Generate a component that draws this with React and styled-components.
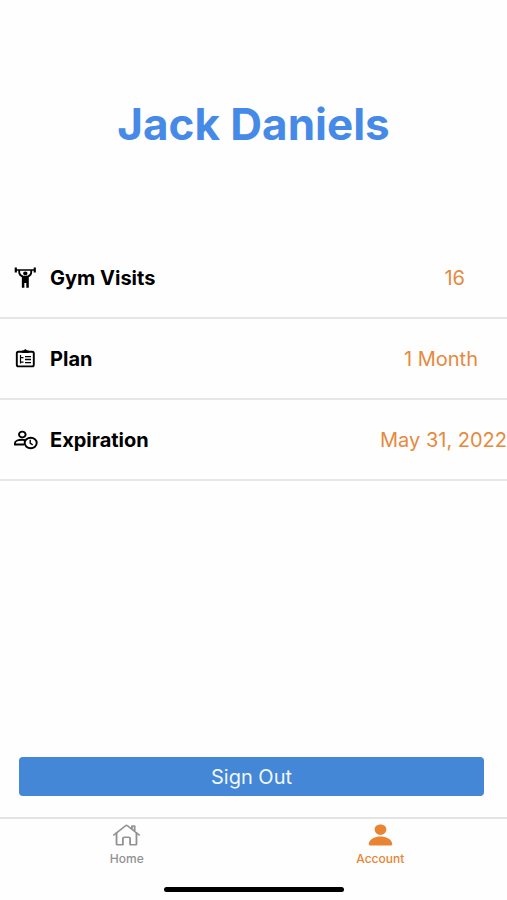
import styled, { createGlobalStyle } from "styled-components";
import { IoHomeOutline, IoPerson } from "react-icons/io5";

const LifterIcon = () => (
  <svg width="26" height="22" viewBox="0 0 24 24" preserveAspectRatio="none" aria-hidden="true">
    <path d="M12.300 5C11.200 5 10.300 5.900 10.300 7S11.200 9 12.300 9 14.300 8.110 14.300 7 13.400 5 12.300 5M22 .5V6H20V4H4.500V6H2.500V.5H4.500V2.500H20V.5H22M15.500 11.260V22.500H13.200V17.500H11.400V22.500H9.100V11.260C7 10.170 5.800 8 5.800 5.500V4H7.500V5.500C7.500 8 9.800 9.800 12.300 9.800S16.900 8 16.900 5.500V4H18.600V5.500C18.600 8 17.500 10.170 15.500 11.260Z" />
  </svg>
);

const PlanIcon = () => (
  <svg width="26" height="22" viewBox="0 0 26 22" fill="none" stroke="#000" aria-hidden="true">
    <rect x="4.800" y="3.800" width="17" height="14.600" rx="1.600" strokeWidth="1.900" />
    <path d="M10 4.500V3h1.700C12.200 1.400 14.500 1.400 15 3H16.700V4.500z" fill="#000" strokeWidth="1" />
    <path d="M8.500 7v8.500M8.500 9.700h3M8.500 14.200h3" strokeWidth="1.200" />
    <path d="M13 8.700h6M13 11.500h6M13 14.700h6" strokeWidth="1.300" />
  </svg>
);

const ExpirationIcon = () => (
  <svg width="26" height="22" viewBox="0 0 26 22" fill="none" stroke="#000" strokeWidth="1.900" aria-hidden="true">
    <ellipse cx="10.300" cy="5.500" rx="3.300" ry="2.900" />
    <path d="M12 15.500H3V14C3 12 6.500 10.800 10 10.800C11.200 10.800 12.400 10.900 13.500 11.200" />
    <ellipse cx="18.700" cy="14" rx="6" ry="5.200" fill="#fff" />
    <path d="M18.200 10.800V14.200L20.700 15.800" strokeWidth="1.400" />
  </svg>
);

const details = [
  { label: "Gym Visits", value: "16", inset: 42, Icon: LifterIcon },
  { label: "Plan", value: "1 Month", inset: 29, Icon: PlanIcon },
  { label: "Expiration", value: "May 31, 2022", inset: 0, Icon: ExpirationIcon },
];

const App = () => (
  <>
    <GlobalStyle />
    <Screen>
      <Main>
        <Name>Jack Daniels</Name>
        <Details>
          {details.map(({ label, value, inset, Icon }) => (
            <Row key={label}>
              <Label>
                <Icon />
                {label}
              </Label>
              <Value $inset={inset}>{value}</Value>
            </Row>
          ))}
        </Details>
        <SignOut type="button">Sign Out</SignOut>
      </Main>
      <TabBar>
        <Tab href="#home">
          <IoHomeOutline preserveAspectRatio="none" aria-hidden="true" />
          Home
        </Tab>
        <Tab href="#account" $active aria-current="page">
          <IoPerson preserveAspectRatio="none" aria-hidden="true" />
          Account
        </Tab>
      </TabBar>
      <HomeIndicator />
    </Screen>
  </>
);
export default App;

const GlobalStyle = createGlobalStyle`
  body {
    margin: 0;
    background: #fefefe;
    font-family: Inter, "Liberation Sans", sans-serif;
  }
`;

const Screen = styled.div`
  min-height: 100vh;
  box-sizing: border-box;
  padding-bottom: 8px;
  display: flex;
  flex-direction: column;
`;

const Main = styled.main`
  flex: 1;
  display: flex;
  flex-direction: column;
`;

const Name = styled.h1`
  margin: 99px 0 89px;
  color: #468ae8;
  font-size: 44px;
  font-weight: 700;
  line-height: 50px;
  text-align: center;
`;

const Details = styled.dl`
  margin: 0;
`;

const Row = styled.div`
  height: 79px;
  padding-left: 12px;
  display: flex;
  align-items: center;
  justify-content: space-between;
  border-bottom: 2px solid #e6e6e6;
  white-space: nowrap;
`;

const Label = styled.dt`
  display: flex;
  align-items: center;
  gap: 12px;
  color: #000;
  font-size: 20px;
  font-weight: 700;
`;

const Value = styled.dd`
  margin: 0;
  padding-right: ${({ $inset }) => $inset}px;
  color: #e6893d;
  font-size: 20px;
`;

const SignOut = styled.button`
  height: 39px;
  margin: auto 23px 21px 19px;
  padding: 0;
  border: 0;
  border-radius: 4px;
  background: #4387d6;
  color: #f1f7ff;
  font-family: inherit;
  font-size: 20px;
  cursor: pointer;
`;

const TabBar = styled.nav`
  padding: 4px 0 21px;
  display: grid;
  grid-template-columns: 1fr 1fr;
  border-top: 2px solid #e4e4e4;
`;

const Tab = styled.a`
  display: flex;
  flex-direction: column;
  align-items: center;
  gap: 5px;
  color: ${({ $active }) => ($active ? "#e88432" : "#919191")};
  font-size: 12px;
  font-weight: 500;
  line-height: 14px;
  text-decoration: none;

  svg {
    width: 29px;
    height: 24px;
  }
`;

const HomeIndicator = styled.div`
  width: 180px;
  height: 5px;
  margin: 0 auto;
  border-radius: 3px;
  background: #000;
`;
